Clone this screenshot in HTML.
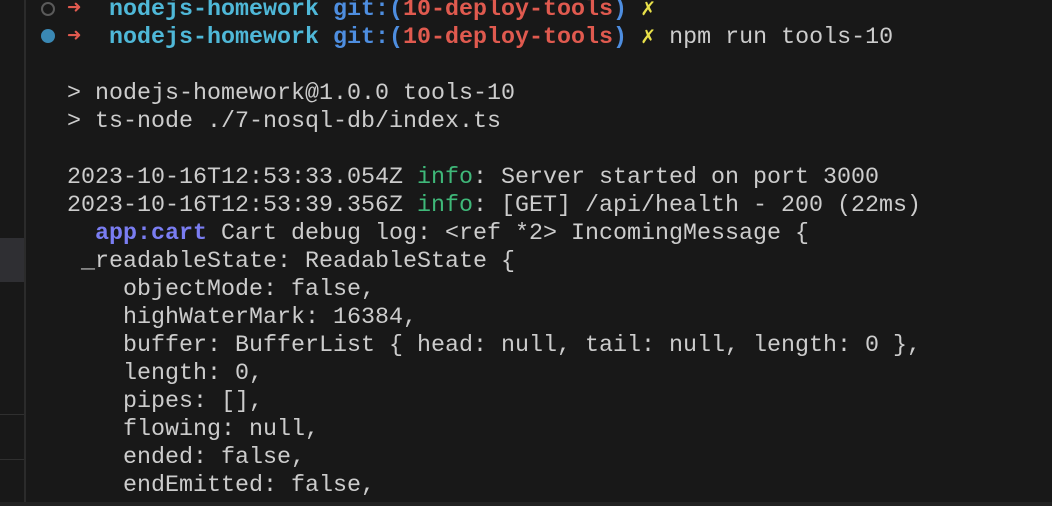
<!DOCTYPE html>
<html><head><meta charset="utf-8"><style>
html,body{margin:0;padding:0;width:1052px;height:506px;overflow:hidden;background:#181818;}
.side{position:absolute;left:0;top:0;width:24px;height:506px;border-right:2px solid #2b2b2b;}
.hl{position:absolute;left:0;top:238px;width:24px;height:44px;background:#2f2f33;}
.l1{position:absolute;left:0;top:414px;width:24px;height:1px;background:#2f2f2f;}
.l2{position:absolute;left:0;top:459px;width:24px;height:1px;background:#2f2f2f;}
.bot{position:absolute;left:0;top:502px;width:1052px;height:4px;background:#222;}
pre{position:absolute;left:67px;top:-4px;margin:0;font-family:"Liberation Mono",monospace;font-size:23.33px;line-height:28px;color:#cccccc;}
.c{color:#4fb8d8;font-weight:bold}.b{color:#4e8ee0;font-weight:bold}.r{color:#e05a4f;font-weight:bold}
.y{color:#e8e04a}.a{color:#e05a4f}.g{color:#3fb879}.p{color:#7a7df2;font-weight:bold}
.dot{position:absolute;border-radius:50%;}
</style></head><body>
<div class="side"></div><div class="hl"></div><div class="l1"></div><div class="l2"></div><div class="bot"></div>
<div class="dot" style="left:41px;top:2px;border:2px solid #5a5a5a;width:10px;height:10px"></div>
<div class="dot" style="left:41px;top:29px;background:#3a88b4;width:14px;height:14px"></div>
<pre><span class="a">➜</span>  <span class="c">nodejs-homework</span> <span class="b">git:(</span><span class="r">10-deploy-tools</span><span class="b">)</span> <span class="y">✗</span>
<span class="a">➜</span>  <span class="c">nodejs-homework</span> <span class="b">git:(</span><span class="r">10-deploy-tools</span><span class="b">)</span> <span class="y">✗</span> npm run tools-10

&gt; nodejs-homework@1.0.0 tools-10
&gt; ts-node ./7-nosql-db/index.ts

2023-10-16T12:53:33.054Z <span class="g">info</span>: Server started on port 3000
2023-10-16T12:53:39.356Z <span class="g">info</span>: [GET] /api/health - 200 (22ms)
  <span class="p">app:cart</span> Cart debug log: &lt;ref *2&gt; IncomingMessage {
 _readableState: ReadableState {
    objectMode: false,
    highWaterMark: 16384,
    buffer: BufferList { head: null, tail: null, length: 0 },
    length: 0,
    pipes: [],
    flowing: null,
    ended: false,
    endEmitted: false,
</pre>
</body></html>
